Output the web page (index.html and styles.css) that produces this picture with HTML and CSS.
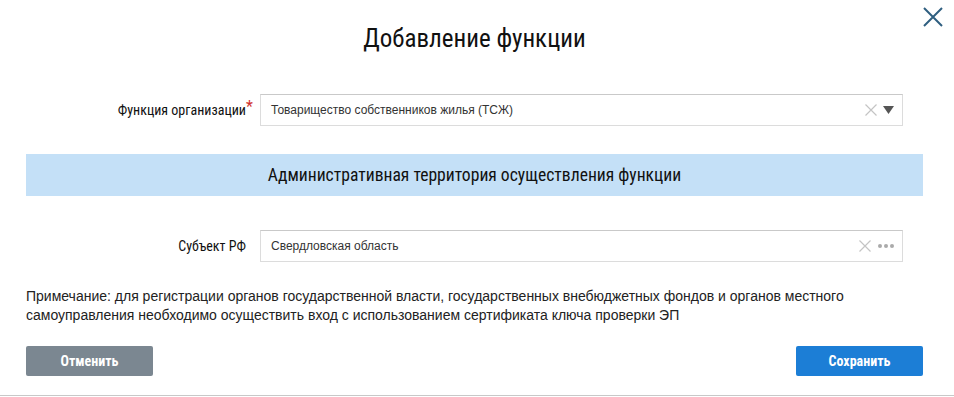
FILE: index.html
```html
<!DOCTYPE html>
<html lang="ru">
<head>
	<meta charset="UTF-8">
	<title>Добавление функции</title>
	<link rel="stylesheet" href="styles.css">
</head>
<body>
<div class="modal">
	<button class="close" type="button" aria-label="Закрыть">
		<svg width="22" height="22" viewBox="0 0 22 22"><path d="M2 2L20 20M20 2L2 20" stroke="#2f5f80" stroke-width="2" fill="none"/></svg>
	</button>
	<h2 class="modal-tit">Добавление функции</h2>

	<div class="row row-first">
		<label class="row-lbl">Функция организации<i class="req">*</i></label>
		<div class="field">
			<span class="field-val">Товарищество собственников жилья (ТСЖ)</span>
			<span class="field-clear"><svg width="12" height="12" viewBox="0 0 12 12"><path d="M0.5 0.5L11.5 11.5M11.5 0.5L0.5 11.5" stroke="#c4c4c4" stroke-width="1.2" fill="none"/></svg></span>
			<span class="field-arrow"><svg width="11" height="8" viewBox="0 0 11 8"><path d="M0 0H11L5.5 8Z" fill="#555"/></svg></span>
		</div>
	</div>

	<div class="band">Административная территория осуществления функции</div>

	<div class="row">
		<label class="row-lbl">Субъект РФ</label>
		<div class="field">
			<span class="field-val">Свердловская область</span>
			<span class="field-clear"><svg width="12" height="12" viewBox="0 0 12 12"><path d="M0.5 0.5L11.5 11.5M11.5 0.5L0.5 11.5" stroke="#c4c4c4" stroke-width="1.2" fill="none"/></svg></span>
			<span class="field-dots"><i></i><i></i><i></i></span>
		</div>
	</div>

	<p class="note">Примечание: для регистрации органов государственной власти, государственных внебюджетных фондов и органов местного самоуправления необходимо осуществить вход с использованием сертификата ключа проверки ЭП</p>

	<div class="btns">
		<button class="btn btn-grey" type="button">Отменить</button>
		<button class="btn btn-blue" type="button">Сохранить</button>
	</div>
</div>
</body>
</html>
```

FILE: styles.css
```css
body,h2,p{
	margin: 0;
}
body{
	background-color: #fff;
	font-family: "Liberation Sans", Arial, sans-serif;
	color: #222;
}
.modal{
	position: relative;
	width: 954px;
	height: 396px;
	box-sizing: border-box;
	padding: 21px 31px 0 26px;
	border-bottom: 1px solid #c8c8c8;
}
.close{
	position: absolute;
	top: 6px;
	right: 10px;
	padding: 0;
	border: 0;
	background: none;
	cursor: pointer;
}
.modal-tit{
	font: 25px/36px "Roboto Condensed", "DejaVu Sans Condensed", "Liberation Sans Narrow", sans-serif;
	font-weight: normal;
	font-stretch: condensed;
	text-align: center;
	color: #111;
}
.row{
	display: grid;
	grid-template-columns: 220px 1fr;
	column-gap: 14px;
	align-items: center;
	padding-right: 20px;
	margin-top: 34px;
}
.row-first{
	margin-top: 37px;
}
.row-lbl{
	text-align: right;
	font: 14px "Roboto Condensed", "DejaVu Sans Condensed", "Liberation Sans Narrow", sans-serif;
	font-stretch: condensed;
	color: #111;
	position: relative;
}
.req{
	position: absolute;
	right: -7px;
	top: -5px;
	font-style: normal;
	color: #d0312d;
	font-size: 16px;
}
.field{
	display: flex;
	align-items: center;
	height: 32px;
	box-sizing: border-box;
	border: 1px solid #dcdcdc;
	border-top-color: #c9c9c9;
	padding: 0 8px 0 10px;
	font-size: 12px;
	color: #333;
}
.field-val{
	flex: 1;
}
.field-clear{
	display: flex;
	margin-right: 6px;
}
.field-arrow{
	display: flex;
}
.field-dots{
	display: flex;
	gap: 2px;
	margin-left: 1px;
}
.field-dots i{
	width: 4px;
	height: 4px;
	border-radius: 50%;
	background-color: #aaa;
}
.band{
	margin-top: 28px;
	height: 42px;
	background-color: #c4e0f7;
	text-align: center;
	font: 17.6px/42px "Roboto Condensed", "DejaVu Sans Condensed", "Liberation Sans Narrow", sans-serif;
	font-stretch: condensed;
	color: #111;
}
.note{
	margin-top: 25px;
	font-size: 14px;
	line-height: 19px;
	color: #222;
}
.btns{
	display: flex;
	justify-content: space-between;
	margin-top: 21px;
}
.btn{
	width: 127px;
	height: 30px;
	border: 0;
	border-radius: 2px;
	color: #fff;
	font: bold 14px "Roboto Condensed", "DejaVu Sans Condensed", "Liberation Sans Narrow", sans-serif;
	font-stretch: condensed;
	cursor: pointer;
}
.btn-grey{
	background-color: #7b8791;
}
.btn-blue{
	background-color: #1c7ed6;
}
```
